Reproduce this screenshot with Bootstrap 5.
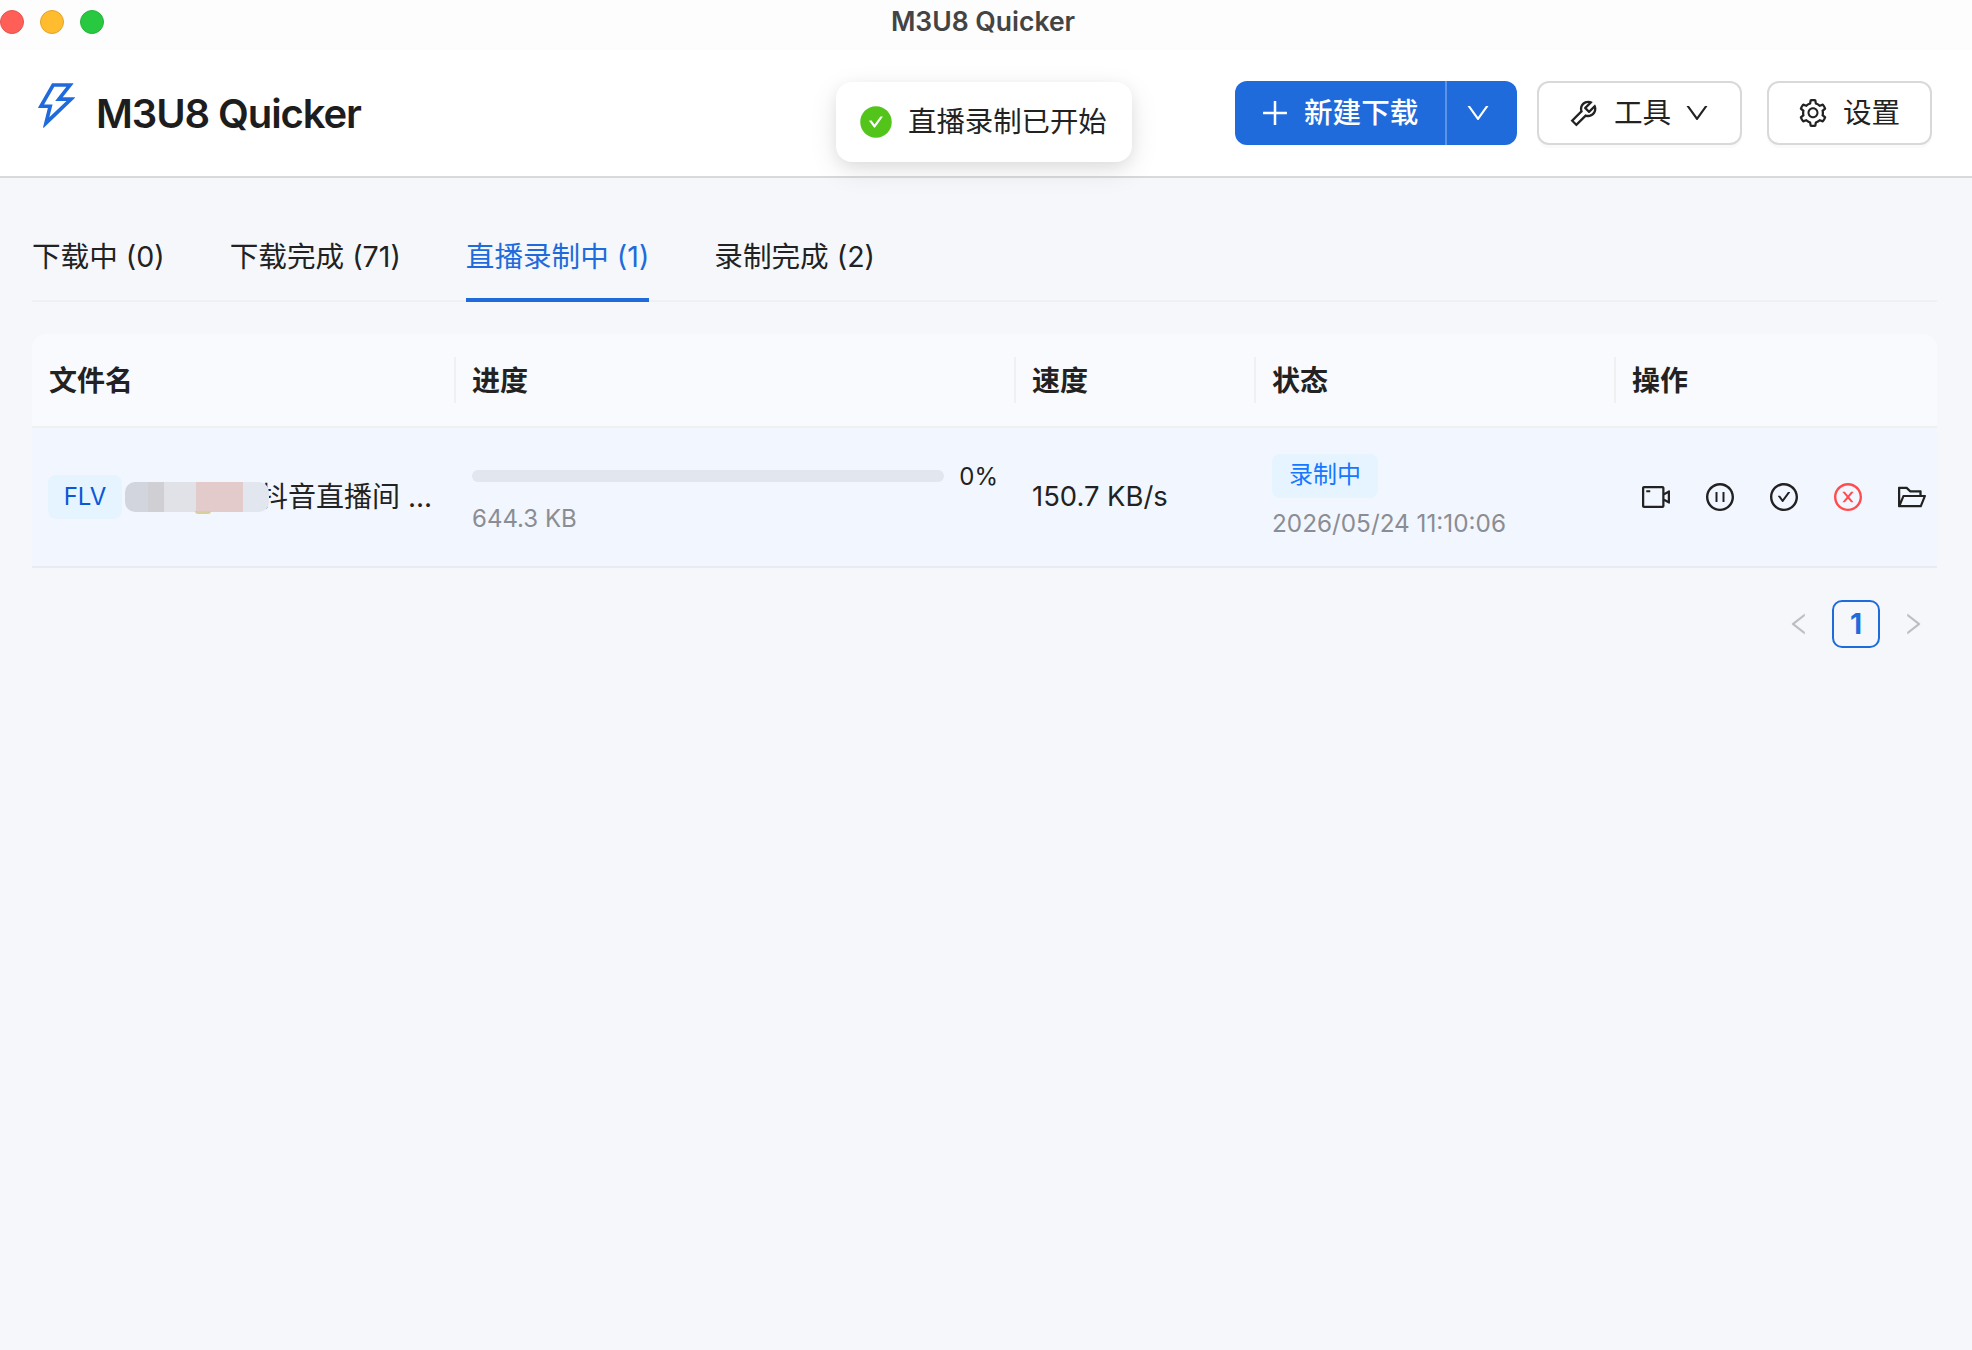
<!DOCTYPE html>
<html lang="zh-CN">
<head>
  <meta charset="UTF-8" />
  <meta name="viewport" content="width=device-width, initial-scale=1.0"/>
  <title>M3U8 Quicker</title>
  <link href="https://cdn.jsdelivr.net/npm/bootstrap@5.3.3/dist/css/bootstrap.min.css" rel="stylesheet">
  <style>
    body {
      font-family: Inter, "Noto Sans CJK SC", sans-serif;
      font-size: 28px;
      color: #222;
      background: #f5f7fb;
      min-height: 1350px;
    }
    svg { fill: currentColor; display: block; flex: none; }

    .titlebar {
      height: 50px;
      background: #fdfdfd;
      display: grid;
      grid-template-columns: 1fr auto 1fr;
      align-items: center;
    }
    .lights { display: flex; gap: 16px; margin-top: -6px; }
    .light { width: 24px; height: 24px; border-radius: 50%; }
    .light-r { background: #ff5f57; border: 1px solid #e5534c; }
    .light-y { background: #febc2e; border: 1px solid #e3a32a; }
    .light-g { background: #28c840; border: 1px solid #25b43a; }
    .wintitle { font-size: 26.5px; font-weight: 600; color: #444; margin-top: -6px; margin-left: -6px; }

    .appbar {
      height: 128px;
      background: #fff;
      border-bottom: 2px solid #d9d9d9;
      padding: 0 40px 0 29px;
    }
    .brand-icon { color: #1f6bdb; margin-top: -16px; }
    .brand-name { font-size: 40px; font-weight: 600; color: #1d1d1d; letter-spacing: -1.1px; margin-left: 12px; margin-top: 1px; }

    .msg-toast {
      position: absolute;
      left: 836px;
      top: 82px;
      width: 296px;
      height: 80px;
      background: #fff;
      border-radius: 16px;
      box-shadow: 0 8px 28px rgba(0,0,0,.1), 0 4px 14px rgba(0,0,0,.06);
      padding-left: 22px;
      font-size: 28.4px;
      z-index: 10;
    }
    .msg-toast svg { color: #52c41a; }
    .msg-toast span { margin-left: 14px; }

    .act-btn {
      height: 64px;
      font-size: 28.6px;
      display: inline-flex;
      align-items: center;
      border-radius: 12px;
      --bs-btn-padding-y: 0;
    }
    .act-btn span { padding-top: 1px; }
    .act-primary {
      background: #1f6bdb;
      border: 0;
      color: #fff;
      font-weight: 500;
    }
    .act-primary:hover { background: #1f6bdb; color: #fff; }
    .new-main { width: 210px; padding: 0 0 0 23px; border-radius: 12px 0 0 12px; }
    .new-main span { margin-left: 12px; }
    .new-drop {
      width: 72px;
      justify-content: center;
      padding: 0 8px 0 0;
      border-radius: 0 12px 12px 0;
      border-left: 2px solid #5c93e6;
    }
    .act-plain {
      background: #fff;
      border: 2px solid #d9d9d9;
      color: #222;
      box-shadow: 0 3px 0 rgba(0,0,0,.02);
    }
    .tool-btn { width: 205px; padding: 0 0 0 28px; margin-left: 20px; }
    .tool-btn span { margin: 0 12px 0 14px; }
    .set-btn { width: 165px; padding: 0 0 0 28px; margin-left: 25px; }
    .set-btn span { margin-left: 14px; }

    .content { padding: 59px 35px 0 32px; }
    .tabbar { gap: 65px; border-bottom: 2px solid #eff0f2; height: 65px; font-size: 28.6px; }
    .tabbar a {
      display: block;
      height: 65px;
      line-height: 40px;
      color: #222;
      text-decoration: none;
      white-space: nowrap;
    }
    .tabbar a.on { color: #1f6bdb; border-bottom: 4px solid #1f6bdb; }

    .table-box { margin-top: 32px; border-radius: 14px 14px 0 0; overflow: hidden; }
    .rec-table { table-layout: fixed; margin: 0; width: 100%; --bs-table-bg: transparent; }
    .rec-table col.c1 { width: 423px; }
    .rec-table col.c2 { width: 560px; }
    .rec-table col.c3 { width: 240px; }
    .rec-table col.c4 { width: 360px; }
    .rec-table th {
      height: 93px;
      padding: 2px 17px 0;
      font-weight: 700;
      font-size: 28px;
      color: #222;
      background: #f9fafd;
      border-bottom: 2px solid #f0f0f0;
      vertical-align: middle;
      position: relative;
    }
    .rec-table th + th::before {
      content: "";
      position: absolute;
      left: -1px;
      top: 23px;
      width: 2px;
      height: 46px;
      background: #eff0f2;
    }
    .rec-table td {
      height: 140px;
      padding: 0 17px;
      background: #f2f6fe;
      border-bottom: 2px solid #e8ebf1;
      color: #222;
      vertical-align: middle;
    }
    .type-tag {
      display: flex;
      align-items: center;
      justify-content: center;
      width: 74px;
      height: 44px;
      flex: none;
      border-radius: 8px;
      background: #e6f4ff;
      color: #0958d9;
      font-size: 24px;
      margin-left: -1px;
    }
    .smudge {
      width: 144px;
      height: 30px;
      flex: none;
      margin-left: 3px;
      border-radius: 10px;
      background: linear-gradient(90deg, #d2d5de 0 16%, #cfcfd4 16% 27%, #e1e2e8 27% 49%, #e3cbcb 49% 82%, #e2e6ef 82%);
      position: relative;
      z-index: 1;
    }
    .smudge::after {
      content: "";
      position: absolute;
      left: 70px;
      bottom: -2px;
      width: 16px;
      height: 3px;
      border-radius: 0 0 8px 8px;
      background: #d8cf9c;
    }
    .file-name { margin-left: -9px; white-space: nowrap; }
    .bar-track {
      width: 480px;
      height: 12px;
      border-radius: 6px;
      background: #e2e6ef;
    }
    .bar-pct { font-size: 24px; margin-left: 15px; line-height: 30px; margin-top: 2px; }
    .muted-sm { font-size: 24px; color: #8a8d93; line-height: 30px; }
    .size-line { margin-top: 12px; }
    .speed-val { font-size: 27.4px; }
    .state-tag {
      display: block;
      width: 106px;
      height: 44px;
      line-height: 42px;
      text-align: center;
      border-radius: 8px;
      background: #e6f4ff;
      color: #1677ff;
      font-size: 24px;
      margin-top: -2px;
    }
    .date-line { margin-top: 10px; font-size: 24.3px; }
    .op-icons { gap: 32px; margin-left: 8px; }
    .op-icons .danger { color: #ff4d4f; }

    .pager { margin: 32px 8px 0 0; justify-content: flex-end; align-items: center; }
    .pager .arrow { color: #bdbfc4; display: flex; width: 32px; justify-content: center; }
    .pager .cur {
      width: 48px;
      height: 48px;
      margin: 0 17px;
      border: 2px solid #1f6bdb;
      border-radius: 10px;
      color: #1f6bdb;
      font-weight: 700;
      font-size: 28px;
      display: flex;
      align-items: center;
      justify-content: center;
    }
  </style>
</head>
<body>
  <div class="titlebar">
    <div class="lights">
      <div class="light light-r"></div>
      <div class="light light-y"></div>
      <div class="light light-g"></div>
    </div>
    <div class="wintitle">M3U8 Quicker</div>
  </div>

  <header class="appbar d-flex align-items-center justify-content-between">
    <div class="d-flex align-items-center">
      <svg class="brand-icon" width="55" height="55" viewBox="0 0 1024 1024"><path d="M848 359.3H627.7L825.8 109c4.1-5.3.4-13-6.3-13H436c-2.8 0-5.5 1.5-6.9 4L170 547.5c-3.1 5.3.7 12 6.9 12h174.4l-89.4 357.6c-1.9 7.8 7.5 13.3 13.3 7.7L853.5 373c5.2-4.9 1.7-13.7-5.5-13.7zM378.2 732.5l60.3-241H281.1l189.6-327.4h224.6L487 427.4h211L378.2 732.5z"/></svg>
      <div class="brand-name">M3U8 Quicker</div>
    </div>
    <div class="d-flex align-items-center">
      <button class="btn act-btn act-primary new-main">
        <svg width="34" height="34" viewBox="0 0 1024 1024"><path d="M482 152h60q8 0 8 8v704q0 8-8 8h-60q-8 0-8-8V160q0-8 8-8z"/><path d="M192 474h672q8 0 8 8v60q0 8-8 8H160q-8 0-8-8v-60q0-8 8-8z"/></svg>
        <span>新建下载</span>
      </button>
      <button class="btn act-btn act-primary new-drop">
        <svg width="28" height="28" viewBox="0 0 1024 1024"><path d="M884 256h-75c-5.1 0-9.9 2.5-12.9 6.6L512 654.2 227.9 262.6c-3-4.1-7.8-6.6-12.9-6.6h-75c-6.5 0-10.3 7.4-6.5 12.7l352.6 486.1c12.8 17.6 39 17.6 51.7 0l352.6-486.1c3.9-5.3.1-12.7-6.4-12.7z"/></svg>
      </button>
      <button class="btn act-btn act-plain tool-btn">
        <svg width="33" height="33" viewBox="0 0 1024 1024"><path d="M876.6 239.5c-.5-.9-1.2-1.8-2-2.5-5-5-13.1-5-18.1 0L684.2 409.3l-67.9-67.9L788.7 169c.8-.8 1.4-1.6 2-2.5 3.6-6.1 1.6-13.9-4.5-17.5-98.2-58-226.8-44.7-311.3 39.7-67 67-89.2 162-66.5 247.4l-293 293c-3 3-2.8 7.9.3 11l169.7 169.7c3.1 3.1 8.1 3.3 11 .3l292.9-292.9c85.5 22.8 180.5.7 247.6-66.4 84.4-84.5 97.7-213.1 39.7-311.3zM786 499.8c-58.1 58.1-145.3 69.3-214.6 33.6l-8.8 8.8-.1-.1-274 274.1-79.2-79.2 230.1-230.1s0 .1.1.1l52.8-52.8c-35.7-69.3-24.5-156.5 33.6-214.6a184.2 184.2 0 01144-53.5L537 318.9a32.05 32.05 0 000 45.3l124.5 124.5a32.05 32.05 0 0045.3 0l132.8-132.8c3.7 51.8-14.4 104.8-53.6 143.9z"/></svg>
        <span>工具</span>
        <svg width="28" height="28" viewBox="0 0 1024 1024"><path d="M884 256h-75c-5.1 0-9.9 2.5-12.9 6.6L512 654.2 227.9 262.6c-3-4.1-7.8-6.6-12.9-6.6h-75c-6.5 0-10.3 7.4-6.5 12.7l352.6 486.1c12.8 17.6 39 17.6 51.7 0l352.6-486.1c3.9-5.3.1-12.7-6.4-12.7z"/></svg>
      </button>
      <button class="btn act-btn act-plain set-btn">
        <svg width="32" height="32" viewBox="0 0 1024 1024"><path d="M924.8 625.7l-65.5-56c3.1-19 4.7-38.4 4.7-57.8s-1.6-38.8-4.7-57.8l65.5-56a32.03 32.03 0 009.3-35.2l-.9-2.6a443.74 443.74 0 00-79.7-137.9l-1.8-2.1a32.12 32.12 0 00-35.1-9.5l-81.3 28.9c-30-24.6-63.5-44-99.7-57.6l-15.7-85a32.05 32.05 0 00-25.8-25.7l-2.7-.5c-52.1-9.4-106.9-9.4-159 0l-2.7.5a32.05 32.05 0 00-25.8 25.7l-15.8 85.4a351.86 351.86 0 00-99 57.4l-81.9-29.1a32 32 0 00-35.1 9.5l-1.8 2.1a446.02 446.02 0 00-79.7 137.9l-.9 2.6c-4.5 12.5-.8 26.5 9.3 35.2l66.3 56.6c-3.1 18.8-4.6 38-4.6 57.1 0 19.2 1.5 38.4 4.6 57.1L99 625.5a32.03 32.03 0 00-9.3 35.2l.9 2.6c18.1 50.4 44.9 96.9 79.7 137.9l1.8 2.1a32.12 32.12 0 0035.1 9.5l81.9-29.1c29.8 24.5 63.1 43.9 99 57.4l15.8 85.4a32.05 32.05 0 0025.8 25.7l2.7.5a449.4 449.4 0 00159 0l2.7-.5a32.05 32.05 0 0025.8-25.7l15.7-85a350 350 0 0099.7-57.6l81.3 28.9a32 32 0 0035.1-9.5l1.8-2.1c34.8-41.1 61.6-87.5 79.7-137.9l.9-2.6c4.5-12.3.8-26.3-9.3-35zM788.3 465.9c2.5 15.1 3.8 30.6 3.8 46.1s-1.3 31-3.8 46.1l-6.6 40.1 74.7 63.9a370.03 370.03 0 01-42.6 73.6L721 702.8l-31.4 25.8c-23.9 19.6-50.5 35-79.3 45.8l-38.1 14.3-17.9 97a377.5 377.5 0 01-85 0l-17.9-97.2-37.8-14.5c-28.5-10.8-55-26.2-78.7-45.7l-31.4-25.9-93.4 33.2c-17-22.9-31.2-47.6-42.6-73.6l75.5-64.5-6.5-40c-2.4-14.9-3.7-30.3-3.7-45.5 0-15.3 1.2-30.6 3.7-45.5l6.5-40-75.5-64.5c11.3-26.1 25.6-50.7 42.6-73.6l93.4 33.2 31.4-25.9c23.7-19.5 50.2-34.9 78.7-45.7l37.9-14.3 17.9-97.2c28.1-3.2 56.8-3.2 85 0l17.9 97 38.1 14.3c28.7 10.8 55.4 26.2 79.3 45.8l31.4 25.8 92.8-32.9c17 22.9 31.2 47.6 42.6 73.6L781.8 426l6.5 39.9zM512 326c-97.2 0-176 78.8-176 176s78.8 176 176 176 176-78.8 176-176-78.8-176-176-176zm79.2 255.2A111.6 111.6 0 01512 614c-29.9 0-58-11.7-79.2-32.8A111.6 111.6 0 01400 502c0-29.9 11.7-58 32.8-79.2C454 401.6 482.1 390 512 390c29.9 0 58 11.6 79.2 32.8A111.6 111.6 0 01624 502c0 29.9-11.7 58-32.8 79.2z"/></svg>
        <span>设置</span>
      </button>
    </div>
  </header>

  <div class="msg-toast d-flex align-items-center">
    <svg width="36" height="36" viewBox="0 0 1024 1024"><path d="M512 64C264.6 64 64 264.6 64 512s200.6 448 448 448 448-200.6 448-448S759.4 64 512 64zm193.5 301.7l-210.6 292a31.8 31.8 0 01-51.7 0L318.5 484.9c-3.8-5.3 0-12.7 6.5-12.7h46.9c10.2 0 19.9 4.9 25.9 13.3l71.2 98.8 157.2-218c6-8.3 15.6-13.3 25.9-13.3H699c6.5 0 10.3 7.4 6.5 12.7z"/></svg>
    <span>直播录制已开始</span>
  </div>

  <main class="content">
    <nav class="nav tabbar">
      <a href="#">下载中 (0)</a>
      <a href="#">下载完成 (71)</a>
      <a href="#" class="on">直播录制中 (1)</a>
      <a href="#">录制完成 (2)</a>
    </nav>

    <div class="table-box">
      <table class="table rec-table">
        <colgroup>
          <col class="c1"><col class="c2"><col class="c3"><col class="c4"><col>
        </colgroup>
        <thead>
          <tr>
            <th>文件名</th>
            <th>进度</th>
            <th>速度</th>
            <th>状态</th>
            <th>操作</th>
          </tr>
        </thead>
        <tbody>
          <tr>
            <td>
              <div class="d-flex align-items-center">
                <span class="type-tag">FLV</span>
                <span class="smudge"></span>
                <span class="file-name">抖音直播间 ...</span>
              </div>
            </td>
            <td>
              <div class="d-flex align-items-center">
                <div class="bar-track"></div>
                <div class="bar-pct">0%</div>
              </div>
              <div class="muted-sm size-line">644.3 KB</div>
            </td>
            <td class="speed-val">150.7 KB/s</td>
            <td>
              <span class="state-tag">录制中</span>
              <div class="muted-sm date-line">2026/05/24 11:10:06</div>
            </td>
            <td>
              <div class="d-flex op-icons">
                <svg width="32" height="32" viewBox="0 0 1024 1024"><path d="M912 302.3L784 376V224c0-35.3-28.7-64-64-64H128c-35.3 0-64 28.7-64 64v576c0 35.3 28.7 64 64 64h592c35.3 0 64-28.7 64-64V648l128 73.7c21.3 12.3 48-3.1 48-27.6V330c0-24.6-26.7-40-48-27.7zM712 792H136V232h576v560zm176-167l-104-59.8V458.9L888 399v226zM208 360h112c4.4 0 8-3.6 8-8v-48c0-4.4-3.6-8-8-8H208c-4.4 0-8 3.6-8 8v48c0 4.4 3.6 8 8 8z"/></svg>
                <svg width="32" height="32" viewBox="0 0 1024 1024"><path d="M512 64C264.6 64 64 264.6 64 512s200.6 448 448 448 448-200.6 448-448S759.4 64 512 64zm0 820c-205.4 0-372-166.6-372-372s166.6-372 372-372 372 166.6 372 372-166.6 372-372 372z"/><path d="M424 352h-48c-4.4 0-8 3.6-8 8v304c0 4.4 3.6 8 8 8h48c4.4 0 8-3.6 8-8V360c0-4.4-3.6-8-8-8zm224 0h-48c-4.4 0-8 3.6-8 8v304c0 4.4 3.6 8 8 8h48c4.4 0 8-3.6 8-8V360c0-4.4-3.6-8-8-8z"/></svg>
                <svg width="32" height="32" viewBox="0 0 1024 1024"><path d="M699 353h-46.9c-10.2 0-19.9 4.9-25.9 13.3L469 584.3l-71.2-98.8c-6-8.3-15.6-13.3-25.9-13.3H325c-6.5 0-10.3 7.4-6.5 12.7l124.6 172.8a31.8 31.8 0 0051.7 0l210.6-292c3.9-5.3.1-12.7-6.4-12.7z"/><path d="M512 64C264.6 64 64 264.6 64 512s200.6 448 448 448 448-200.6 448-448S759.4 64 512 64zm0 820c-205.4 0-372-166.6-372-372s166.6-372 372-372 372 166.6 372 372-166.6 372-372 372z"/></svg>
                <svg class="danger" width="32" height="32" viewBox="0 0 1024 1024"><path d="M685.4 354.8c0-4.4-3.6-8-8-8l-66 .3L512 465.6l-99.3-118.4-66.1-.3c-4.4 0-8 3.5-8 8 0 1.9.7 3.7 1.9 5.2l130.1 155L340.5 670a8.32 8.32 0 00-1.9 5.2c0 4.4 3.6 8 8 8l66.1-.3L512 564.4l99.3 118.4 66 .3c4.4 0 8-3.5 8-8 0-1.9-.7-3.7-1.9-5.2L553.5 515l130.1-155c1.2-1.4 1.8-3.3 1.8-5.2z"/><path d="M512 64C264.6 64 64 264.6 64 512s200.6 448 448 448 448-200.6 448-448S759.4 64 512 64zm0 820c-205.4 0-372-166.6-372-372s166.6-372 372-372 372 166.6 372 372-166.6 372-372 372z"/></svg>
                <svg width="32" height="32" viewBox="0 0 1024 1024"><path d="M928 444H820V330.4c0-17.7-14.3-32-32-32H473L355.7 186.2a8.15 8.15 0 00-5.5-2.2H96c-17.7 0-32 14.3-32 32v592c0 17.7 14.3 32 32 32h698c13 0 24.8-7.9 29.7-20l134-332c1.5-3.8 2.3-7.9 2.3-12 0-17.7-14.3-32-32-32zM136 256h188.5l119.6 114.4H748V444H238c-13 0-24.8 7.9-29.7 20L136 643.2V256zm635.3 512H159l103.3-256h612.4L771.3 768z"/></svg>
              </div>
            </td>
          </tr>
        </tbody>
      </table>
    </div>

    <div class="d-flex pager">
      <span class="arrow"><svg width="28" height="28" viewBox="0 0 1024 1024"><path d="M724 218.3V141c0-6.7-7.7-10.4-12.9-6.3L260.3 486.8a31.86 31.86 0 000 50.3l450.8 352.1c5.3 4.1 12.9.4 12.9-6.3v-77.3c0-4.9-2.3-9.6-6.1-12.6l-360-281 360-281.1c3.8-3 6.1-7.7 6.1-12.6z"/></svg></span>
      <span class="cur">1</span>
      <span class="arrow"><svg width="28" height="28" viewBox="0 0 1024 1024"><path d="M765.7 486.8L314.9 134.7A7.97 7.97 0 00302 141v77.3c0 4.9 2.3 9.6 6.1 12.6l360 281.1-360 281.1c-3.9 3-6.1 7.7-6.1 12.6V883c0 6.7 7.7 10.4 12.9 6.3l450.8-352.1a31.96 31.96 0 000-50.4z"/></svg></span>
    </div>
  </main>
  <script src="https://cdn.jsdelivr.net/npm/bootstrap@5.3.3/dist/js/bootstrap.bundle.min.js"></script>
</body>
</html>
